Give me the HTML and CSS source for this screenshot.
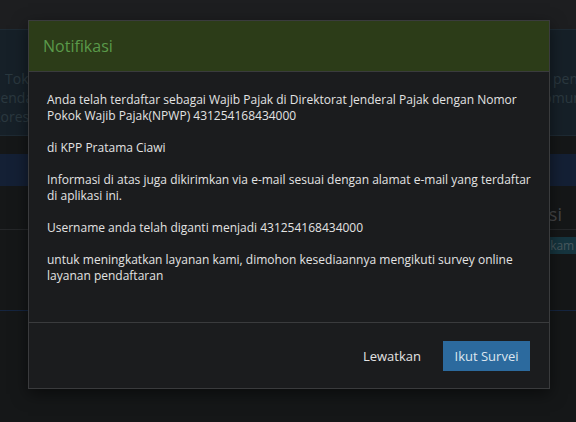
FILE: index.html
```html
<!DOCTYPE html>
<html lang="id">
<head>
<meta charset="utf-8">
<title>Notifikasi</title>
<link rel="stylesheet" href="styles.css">
</head>
<body>
<div class="page">
  <div class="topbar"></div>
  <div class="alert">
    <div class="alert-line"><span class="left">Token aktivasi telah dikirim</span><span class="right">pendaftaran</span></div>
    <div class="alert-line"><span class="left cut">Pendaftaran berhasil dilakukan</span><span class="right shift">komunikasi</span></div>
    <div class="alert-line"><span class="left cut">Korespondensi</span><span class="right"></span></div>
  </div>
  <div class="row-blue"></div>
  <div class="row-title"><span class="big">Registrasi</span></div>
  <div class="row-badge"><span class="badge">Rekam / Ubah</span></div>
  <div class="row-line"></div>
</div>

<div class="overlay"></div>

<div class="modal">
  <div class="modal-header">
    <h4 class="modal-title">Notifikasi</h4>
  </div>
  <div class="modal-body">
    <p>Anda telah terdaftar sebagai Wajib Pajak di Direktorat Jenderal Pajak dengan Nomor Pokok Wajib Pajak(NPWP) 431254168434000</p>
    <p>di KPP Pratama Ciawi</p>
    <p>Informasi di atas juga dikirimkan via e-mail sesuai dengan alamat e-mail yang terdaftar di aplikasi ini.</p>
    <p>Username anda telah diganti menjadi 431254168434000</p>
    <p>untuk meningkatkan layanan kami, dimohon kesediaannya mengikuti survey online layanan pendaftaran</p>
  </div>
  <div class="modal-footer">
    <button class="btn btn-link">Lewatkan</button>
    <button class="btn btn-primary">Ikut Survei</button>
  </div>
</div>
</body>
</html>
```

FILE: styles.css
```css
* { box-sizing: border-box; }
html, body { margin: 0; padding: 0; }
body {
  width: 576px;
  height: 422px;
  overflow: hidden;
  background: #2a2e31;
  font-family: "Open Sans", "Noto Sans", sans-serif;
  font-size: 12px;
  color: #e3e3e3;
  position: relative;
}
.page {
  display: flex;
  flex-direction: column;
  overflow: hidden;
}
.topbar {
  height: 29px;
  background: #3a3d40;
}
.alert {
  height: 107px;
  background: #2d4150;
  border-top: 1px solid #3c5566;
  border-bottom: 1px solid #3c5566;
  padding: 39px 0 0 0;
  color: #55707f;
  font-size: 14px;
  line-height: 19px;
  overflow: hidden;
}
.alert-line {
  display: flex;
  white-space: nowrap;
  height: 19px;
}
.alert-line .left {
  flex: none;
  width: 553px;
  padding-left: 5px;
  overflow: hidden;
}
.alert-line .cut {
  text-indent: -13px;
}
.alert-line .right.shift {
  margin-left: -17px;
}
.row-blue {
  margin-top: 18px;
  height: 32px;
  background: #29406a;
}
.row-title {
  height: 44px;
  display: flex;
  justify-content: flex-end;
  align-items: flex-end;
  padding: 0 14px 3px 0;
  border-bottom: 1px solid #4a4e52;
}
.row-title .big {
  font-size: 18px;
  color: #8a8d90;
}
.row-badge {
  height: 81px;
  display: flex;
  align-items: flex-start;
  padding: 7px 0 0 530px;
  border-bottom: 1px solid #2b4a80;
  white-space: nowrap;
}
.badge {
  flex: none;
  background: #2d6a7e;
  color: #8fb0bc;
  font-size: 12px;
  line-height: 17px;
  padding: 0 6px;
}
.overlay {
  position: absolute;
  inset: 0;
  background: rgba(0, 0, 0, 0.5);
}
.modal {
  position: absolute;
  left: 28px;
  top: 20px;
  width: 522px;
  height: 369px;
  background: #1b1c1e;
  border: 1px solid #3a3b3d;
  box-shadow: 0 5px 15px rgba(0, 0, 0, 0.5);
  display: flex;
  flex-direction: column;
}
.modal-header {
  height: 51px;
  background: #2c3c18;
  border-bottom: 1px solid #3a3b3d;
  display: flex;
  align-items: center;
  padding: 0 14px;
}
.modal-title {
  margin: 0;
  font-weight: normal;
  font-size: 16px;
  color: #5a9a4a;
}
.modal-body {
  flex: 1;
  padding: 20px 18px 0 18px;
  line-height: 16px;
}
.modal-body p {
  margin: 0 0 16px 0;
}
.modal-footer {
  height: 66px;
  border-top: 1px solid #3a3b3d;
  display: flex;
  justify-content: flex-end;
  align-items: center;
  gap: 10px;
  padding: 0 19px 0 0;
}
.btn {
  font-family: inherit;
  font-size: 13px;
  border: 0;
  height: 30px;
  padding: 0 12px;
  cursor: pointer;
}
.btn-link {
  background: transparent;
  color: #e3e3e3;
}
.btn-primary {
  background: #2c6a9e;
  color: #dde6ef;
  width: 87px;
  padding: 0;
}
```
